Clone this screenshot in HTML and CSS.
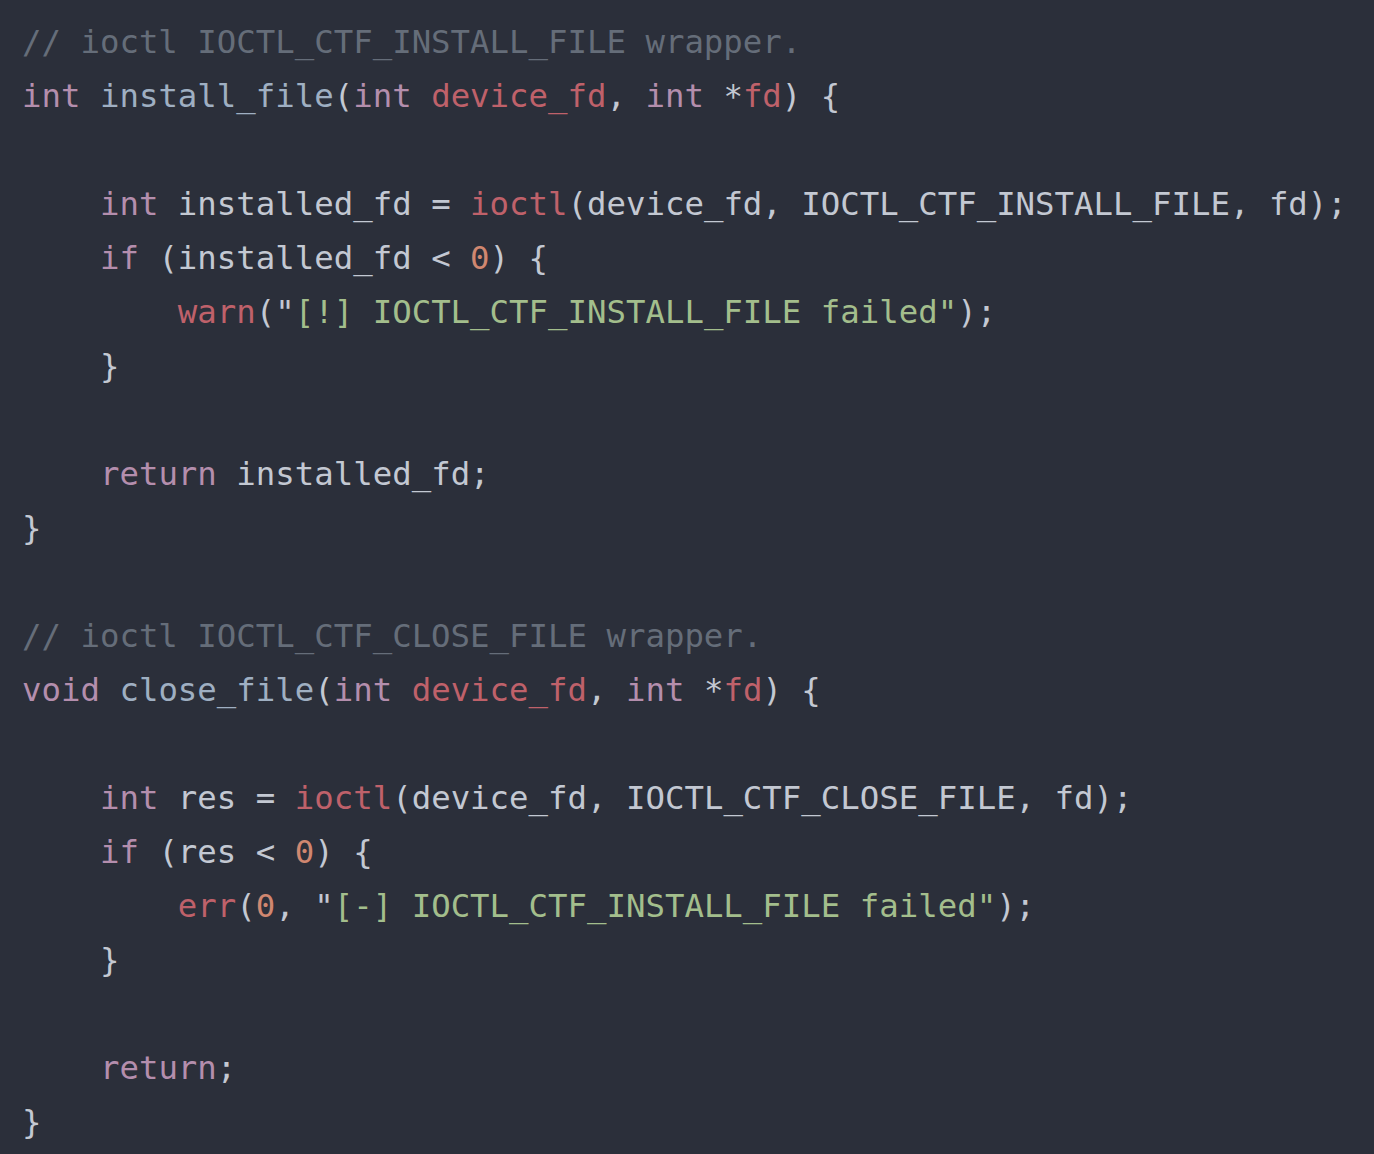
FILE: index.html
```html
<!DOCTYPE html>
<html>
<head>
<meta charset="utf-8">
<link rel="stylesheet" href="styles.css">
</head>
<body>
<pre class="code"><span class="c">// ioctl IOCTL_CTF_INSTALL_FILE wrapper.</span>
<span class="k">int</span> <span class="fn">install_file</span>(<span class="k">int</span> <span class="p">device_fd</span>, <span class="k">int</span> *<span class="p">fd</span>) {

    <span class="k">int</span> installed_fd = <span class="call">ioctl</span>(device_fd, IOCTL_CTF_INSTALL_FILE, fd);
    <span class="k">if</span> (installed_fd &lt; <span class="n">0</span>) {
        <span class="call">warn</span>("<span class="s">[!] IOCTL_CTF_INSTALL_FILE failed"</span>);
    }

    <span class="k">return</span> installed_fd;
}

<span class="c">// ioctl IOCTL_CTF_CLOSE_FILE wrapper.</span>
<span class="k">void</span> <span class="fn">close_file</span>(<span class="k">int</span> <span class="p">device_fd</span>, <span class="k">int</span> *<span class="p">fd</span>) {

    <span class="k">int</span> res = <span class="call">ioctl</span>(device_fd, IOCTL_CTF_CLOSE_FILE, fd);
    <span class="k">if</span> (res &lt; <span class="n">0</span>) {
        <span class="call">err</span>(<span class="n">0</span>, "<span class="s">[-] IOCTL_CTF_INSTALL_FILE failed"</span>);
    }

    <span class="k">return</span>;
}</pre>
</body>
</html>
```

FILE: styles.css
```css
html, body {
  margin: 0;
  padding: 0;
  background: #2b2f3a;
  height: 100%;
}
.code {
  margin: 0;
  padding: 15px 22px 0 22px;
  font-family: "DejaVu Sans Mono", "Liberation Mono", monospace;
  font-size: 32.37px;
  line-height: 54px;
  color: #c3c8d2;
  background: #2b2f3a;
  white-space: pre;
}
.c { color: #656d79; }
.k { color: #b48ead; }
.fn { color: #9fafc2; }
.p { color: #bf616a; }
.call { color: #bf616a; }
.n { color: #d08770; }
.s { color: #a3be8c; }
```
